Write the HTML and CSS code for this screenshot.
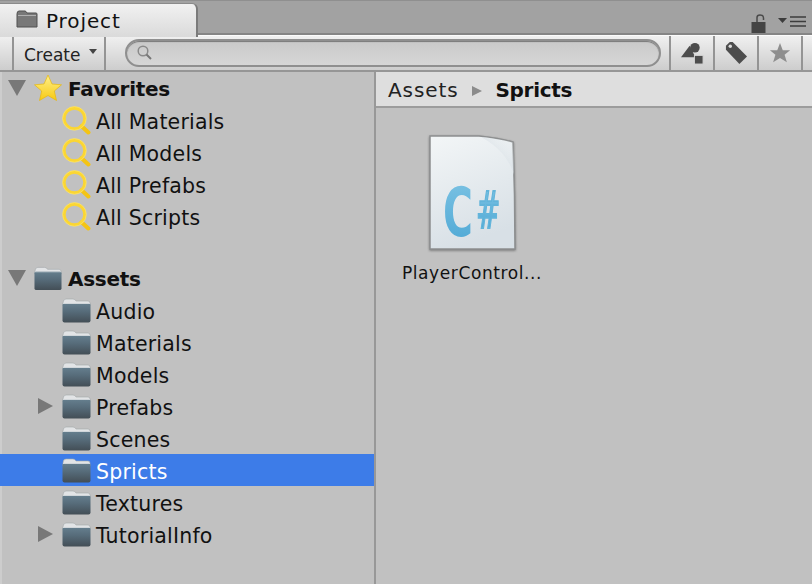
FILE: index.html
```html
<!DOCTYPE html>
<html lang="en">
<head>
<meta charset="utf-8">
<title>Project</title>
<link rel="stylesheet" href="styles.css">
</head>
<body>
<svg class="defs" width="0" height="0" aria-hidden="true">
  <defs>
    <linearGradient id="fb" x1="0" y1="0" x2="0" y2="1">
      <stop offset="0" stop-color="#66808f"/><stop offset="0.45" stop-color="#566b79"/><stop offset="1" stop-color="#434e56"/>
    </linearGradient>
    <linearGradient id="gy" x1="0" y1="0" x2="0" y2="1">
      <stop offset="0" stop-color="#fff08a"/><stop offset="1" stop-color="#f7c912"/>
    </linearGradient>
    <linearGradient id="pg" x1="0" y1="0" x2="0.3" y2="1">
      <stop offset="0" stop-color="#f3f6f7"/><stop offset="1" stop-color="#d8e0e6"/>
    </linearGradient>
    <linearGradient id="cn" x1="1" y1="0" x2="0" y2="1">
      <stop offset="0" stop-color="#f0f3f5" stop-opacity="0"/><stop offset="1" stop-color="#b7c5cf"/>
    </linearGradient>
    <linearGradient id="cs" x1="0" y1="0" x2="0" y2="1">
      <stop offset="0" stop-color="#7fc4e4"/><stop offset="1" stop-color="#4aa6d4"/>
    </linearGradient>
    <symbol id="folder" viewBox="0 0 29 25">
      <path d="M1 5 Q1 1 4 1 H11 Q13 1 14 3 H26 Q28 3 28 5 V8 H1Z" fill="#e2e4e6" stroke="#a2a7aa" stroke-width=".6"/>
      <rect x="0.500" y="5" width="28" height="19.500" rx="2" fill="url(#fb)"/>
      <path d="M1 5.500 H28" stroke="#d0d6da" stroke-width="1"/>
    </symbol>
    <symbol id="mag" viewBox="0 0 28 28">
      <path d="M19 19.500 L25.500 25.500" stroke="#f4c414" stroke-width="4" stroke-linecap="round"/>
      <circle cx="12" cy="12" r="10" fill="none" stroke="#fbd633" stroke-width="3"/>
      <circle cx="12" cy="12" r="11.400" fill="none" stroke="#ffe873" stroke-width=".6"/>
    </symbol>
  </defs>
</svg>
<div class="window">
  <header class="tabbar">
    <div class="tab">
      <svg class="tab-icon" width="22" height="18" viewBox="0 0 22 18"><path d="M1 4 Q1 1 3 1 H9 Q10 1 11 3 H20 Q21 3 21 4 V17 H1Z" fill="#787878" stroke="#505050"/><path d="M2 5.500 H20" stroke="#b0b0b0"/></svg>
      <span>Project</span>
    </div>
    <div class="tab-tools">
      <svg width="15" height="19" viewBox="0 0 15 19"><path d="M6 9 V3.500 Q6 1 9 1 Q12.500 1 12.500 4 V6" fill="none" stroke="#4a4a4a" stroke-width="1.500"/><rect x="0.500" y="8" width="14" height="11" fill="#444"/></svg>
      <svg class="menu-ico" width="28" height="11" viewBox="0 0 28 11"><path d="M0 2 H9 L4.500 7Z" fill="#3c3c3c"/><path d="M12 1 H28 M12 5.500 H28 M12 10 H28" stroke="#3c3c3c" stroke-width="1.700"/></svg>
    </div>
  </header>
  <div class="toolbar">
    <div class="create">Create<i class="caret"></i></div>
    <div class="search">
      <svg width="18" height="18" viewBox="0 0 18 18"><circle cx="7" cy="7" r="4.800" fill="none" stroke="#8a8a8a" stroke-width="1.500"/><path d="M10.500 10.500 L15 15" stroke="#777" stroke-width="2"/></svg>
    </div>
    <div class="tool">
      <svg width="23" height="23" viewBox="0 0 24 24"><path d="M0 16 L9 4 L15 16Z" fill="#4d4d4d"/><circle cx="14.500" cy="6" r="5" fill="#4d4d4d"/><rect x="14" y="14" width="9" height="9" fill="#4d4d4d" stroke="#d4d4d4"/></svg>
    </div>
    <div class="tool">
      <svg width="23" height="23" viewBox="0 0 24 24"><path d="M1 4 L5 0 H8 L23 15 L15 23 L1 8Z" fill="#4d4d4d"/><circle cx="5.500" cy="4.500" r="1.800" fill="#ddd"/></svg>
    </div>
    <div class="tool">
      <svg width="22" height="22" viewBox="0 0 24 24"><path d="M12 1 L15 9 H23 L17 14 L19.500 22 L12 17.500 L4.500 22 L7 14 L1 9 H9Z" fill="#8e8e8e"/></svg>
    </div>
    <div class="tool-end"></div>
  </div>
  <main class="panes">
    <nav class="tree">
      <div class="row root">
        <i class="arrow-down"></i>
        <svg class="root-ico" width="28" height="28" viewBox="0 0 28 28"><path d="M14 1 L18 10 L27.500 10.800 L20.300 17 L22.500 26.500 L14 21.500 L5.500 26.500 L7.700 17 L.5 10.800 L10 10Z" fill="url(#gy)" stroke="#e6b80f" stroke-width=".7"/></svg>
        <b>Favorites</b>
      </div>
      <div class="row item"><svg class="ico" width="29" height="29"><use href="#mag"/></svg><span>All Materials</span></div>
      <div class="row item"><svg class="ico" width="29" height="29"><use href="#mag"/></svg><span>All Models</span></div>
      <div class="row item"><svg class="ico" width="29" height="29"><use href="#mag"/></svg><span>All Prefabs</span></div>
      <div class="row item"><svg class="ico" width="29" height="29"><use href="#mag"/></svg><span>All Scripts</span></div>
      <div class="row root spaced">
        <i class="arrow-down"></i>
        <svg class="root-ico" width="28" height="25"><use href="#folder"/></svg>
        <b>Assets</b>
      </div>
      <div class="row item"><svg class="ico" width="29" height="25"><use href="#folder"/></svg><span>Audio</span></div>
      <div class="row item"><svg class="ico" width="29" height="25"><use href="#folder"/></svg><span>Materials</span></div>
      <div class="row item"><svg class="ico" width="29" height="25"><use href="#folder"/></svg><span>Models</span></div>
      <div class="row item"><i class="arrow-right"></i><svg class="ico" width="29" height="25"><use href="#folder"/></svg><span>Prefabs</span></div>
      <div class="row item"><svg class="ico" width="29" height="25"><use href="#folder"/></svg><span>Scenes</span></div>
      <div class="row item selected"><svg class="ico" width="29" height="25"><use href="#folder"/></svg><span>Spricts</span></div>
      <div class="row item"><svg class="ico" width="29" height="25"><use href="#folder"/></svg><span>Textures</span></div>
      <div class="row item"><i class="arrow-right"></i><svg class="ico" width="29" height="25"><use href="#folder"/></svg><span>TutorialInfo</span></div>
    </nav>
    <section class="content">
      <div class="crumbs"><span class="crumb">Assets</span><i class="crumb-sep"></i><b class="crumb-current">Spricts</b></div>
      <div class="files">
        <figure class="file">
          <svg width="87" height="116" viewBox="0 0 87 116">
            <path d="M1 1 H50 Q70 3 84 7 Q86 60 86 114 H1Z" fill="url(#pg)" stroke="#8d8f90" stroke-width="1.500"/>
            <path d="M52 2 Q72 4 84 7 Q85 24 85 40 Q78 16 52 2Z" fill="url(#cn)"/>
            <text transform="translate(14 101) scale(.6 1)" class="cs-c" fill="url(#cs)">C</text>
            <text transform="translate(47 93) scale(.56 1)" class="cs-s" fill="url(#cs)" stroke="#62b4da" stroke-width="1.800">#</text>
          </svg>
          <figcaption>PlayerControl...</figcaption>
        </figure>
      </div>
    </section>
  </main>
</div>
</body>
</html>
```
FILE: styles.css
```css
* { box-sizing: border-box; }
html, body { margin: 0; height: 100%; }
body {
  font-family: "DejaVu Sans", "Liberation Sans", sans-serif;
  color: #111;
  overflow: hidden;
}
.defs { display: block; height: 0; }
.window { width: 812px; height: 584px; display: flex; flex-direction: column; background: #c1c1c1; }

.tabbar {
  height: 35px;
  flex: none;
  background: #a2a2a2;
  border-top: 1px solid #8f8f8f;
  border-bottom: 2px solid #858585;
  display: flex;
  justify-content: space-between;
}
.tab {
  width: 198px;
  height: 34px;
  margin-top: 2px;
  padding-left: 16px;
  background: linear-gradient(#f1f1f1, #dadada);
  border-top: 1px solid #8a8a8a;
  border-right: 2px solid #7b7b7b;
  border-top-right-radius: 6px;
  display: flex;
  align-items: center;
  gap: 8px;
  font-size: 20px;
  letter-spacing: .9px;
  position: relative;
}
.tab-icon { margin-top: -3px; }
.tab-tools { display: flex; align-items: flex-end; padding: 0 6px 0 0; gap: 12px; }
.tab-tools svg { display: block; }
.menu-ico { margin-bottom: 6px; }

.toolbar {
  height: 37px;
  flex: none;
  background: linear-gradient(#f0f0f0, #cdcdcd);
  border-top: 1px solid #fbfbfb;
  border-bottom: 2px solid #969696;
  display: flex;
  align-items: stretch;
  padding-left: 12px;
}
.create {
  width: 94px;
  border-left: 2px solid #949494;
  border-right: 2px solid #949494;
  padding: 4px 0 0 10px;
  display: flex;
  align-items: center;
  font-size: 17px;
  color: #222;
}
.caret {
  margin: -7px 0 0 8px;
  border: 4.5px solid transparent;
  border-top: 5px solid #444;
  border-bottom: 0;
}
.search {
  width: 536px;
  margin: 3px 8px 3px 19px;
  border: 2px solid #8f8f8f;
  border-radius: 14px;
  background: linear-gradient(#c9c9c9, #d6d6d6);
  box-shadow: inset 0 1px 1px #777;
  display: flex;
  align-items: center;
  padding-left: 9px;
}
.tool {
  width: 44px;
  border-left: 2px solid #949494;
  display: flex;
  align-items: center;
  justify-content: center;
}
.tool-end { flex: 1; border-left: 2px solid #949494; }

.panes { flex: 1; display: flex; min-height: 0; }
.tree {
  width: 376px;
  flex: none;
  border-left: 2px solid #cdcdcd;
  border-right: 2px solid #989898;
  font-size: 20.5px;
  letter-spacing: .2px;
}
.row { height: 32px; display: flex; align-items: center; white-space: nowrap; }
.row span, .row b { margin-top: 4px; }
.row b { font-size: 20px; letter-spacing: -.3px; margin-top: 2px; }
.root { padding-left: 6px; }
.root .root-ico { margin: 0 6px 0 8px; flex: none; }
.spaced { margin-top: 30px; }
.item { padding-left: 60px; position: relative; }
.ico { margin-right: 5px; flex: none; }
.selected { background: #3d7ce8; color: #fff; margin-left: -2px; padding-left: 62px; }
.arrow-down {
  flex: none;
  width: 0; height: 0;
  border-left: 9px solid transparent;
  border-right: 9px solid transparent;
  border-top: 16px solid #787878;
}
.arrow-right {
  position: absolute;
  left: 36px;
  top: 8px;
  border-top: 8px solid transparent;
  border-bottom: 8px solid transparent;
  border-left: 15px solid #787878;
}
.content { flex: 1; display: flex; flex-direction: column; }
.crumbs {
  height: 36px;
  flex: none;
  background: #dedede;
  border-bottom: 2px solid #9c9c9c;
  display: flex;
  align-items: center;
  padding: 1px 0 0 12px;
  font-size: 20px;
}
.crumb { letter-spacing: .9px; color: #222; }
.crumb-sep {
  margin: 2px 14px 0 13px;
  border-top: 5px solid transparent;
  border-bottom: 5px solid transparent;
  border-left: 10px solid #8b8b8b;
}
.crumb-current { letter-spacing: -.3px; }
.files { flex: 1; padding: 27px 0 0 26px; }
.file { margin: 0; width: 140px; display: flex; flex-direction: column; align-items: center; }
.file svg { display: block; filter: drop-shadow(0 1px 1px #777); }
.file figcaption { margin-top: 12px; font-size: 17px; letter-spacing: .6px; white-space: nowrap; color: #111; }
.cs-c { font-family: "DejaVu Sans", sans-serif; font-weight: bold; font-size: 68px; }
.cs-s { font-family: "DejaVu Sans", sans-serif; font-size: 52px; }
```
